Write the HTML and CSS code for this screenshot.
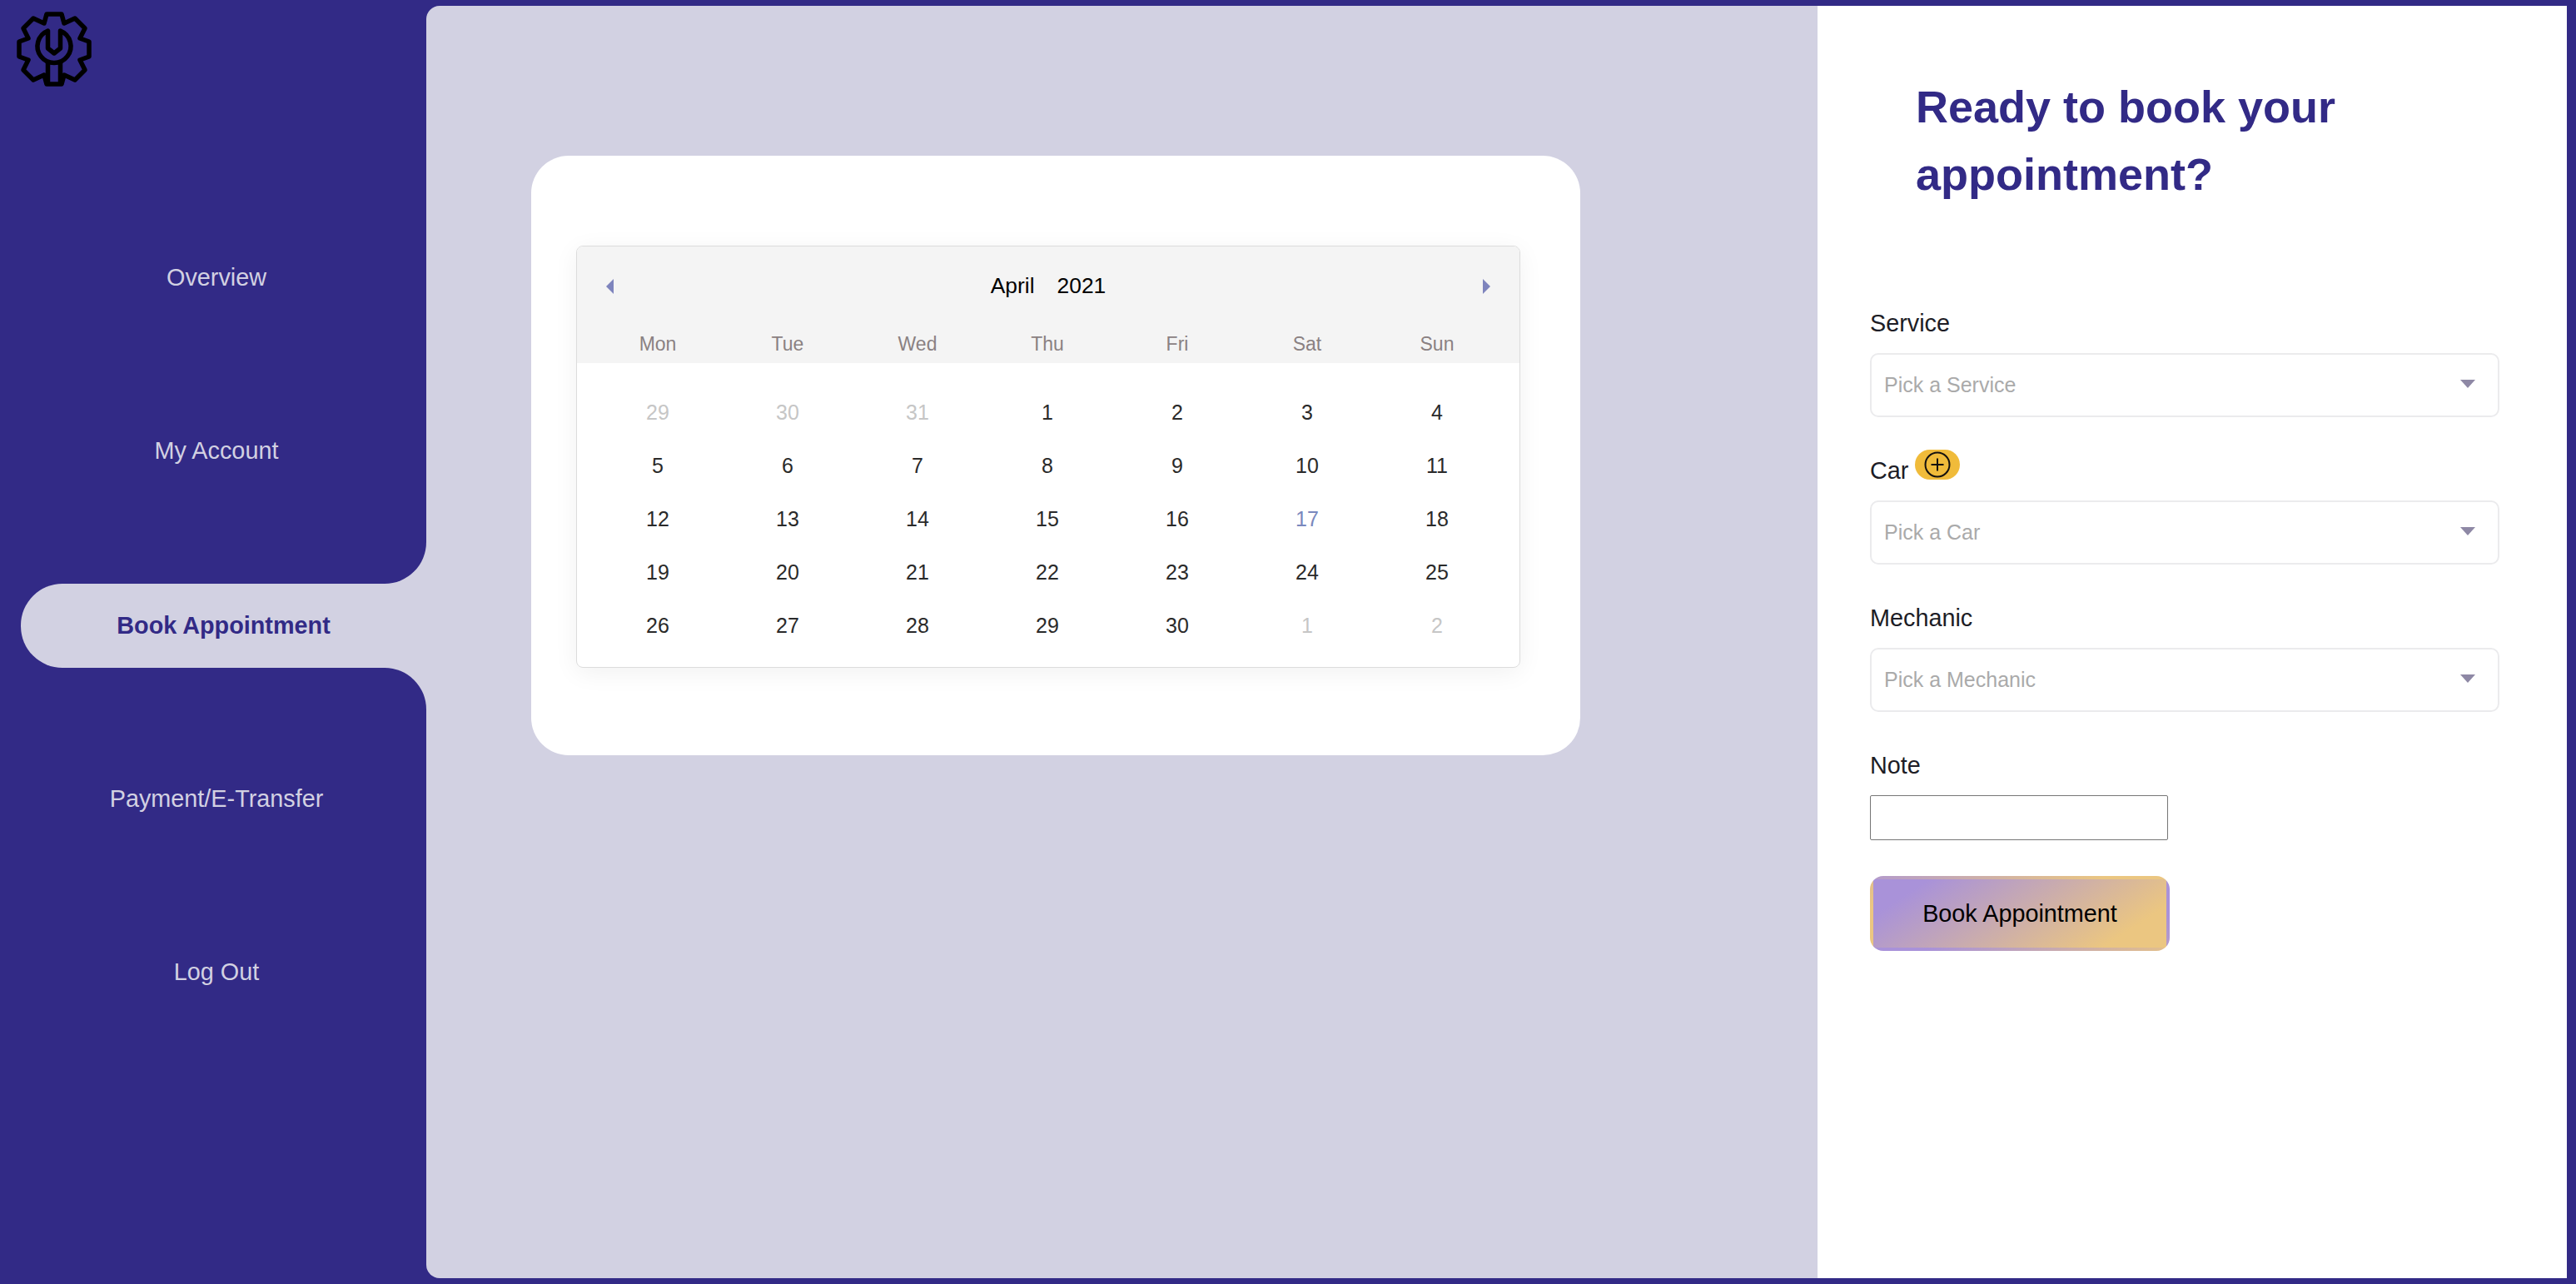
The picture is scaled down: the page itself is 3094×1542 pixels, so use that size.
FILE: index.html
```html
<!DOCTYPE html>
<html lang="en">
<head>
  <meta charset="UTF-8">
  <meta name="viewport" content="width=device-width, initial-scale=1.0">
  <title>Book Appointment</title>
  <link rel="stylesheet" href="styles.css">
</head>
<body>
  <aside class="sidebar">
    <div class="side-top">
      <div class="logo">
        <svg viewBox="0 0 90 90" width="90" height="90" fill="none" stroke="#000" stroke-width="5.5" stroke-linejoin="round">
          <path d="M36 3H54L57 14L70 8L82 20L76 32L87 36V54L76 58L82 70L70 82L57 76L54 87H36L33 76L20 82L8 70L14 58L3 54V36L14 32L8 20L20 8L33 14Z"/>
          <path d="M37.5 23V44L45 50L52.5 44V23A20 20 0 1 1 37.5 23Z"/>
          <path d="M37.5 60V87M52.5 60V87"/>
        </svg>
      </div>
      <a class="nav-link" href="#">Overview</a>
      <a class="nav-link" href="#">My Account</a>
    </div>
    <div class="side-active">
      <a class="nav-pill" href="#">Book Appointment</a>
    </div>
    <div class="side-bottom">
      <a class="nav-link" href="#">Payment/E-Transfer</a>
      <a class="nav-link" href="#">Log Out</a>
    </div>
  </aside>

  <main class="panel">
    <section class="calendar-area">
      <div class="card">
        <div class="calendar">
          <div class="cal-head">
            <div class="cal-title">
              <span class="arrow arrow-left"></span>
              <span class="cal-month">April</span>
              <span class="cal-year">2021</span>
              <span class="arrow arrow-right"></span>
            </div>
            <div class="cal-week">
              <span>Mon</span><span>Tue</span><span>Wed</span><span>Thu</span><span>Fri</span><span>Sat</span><span>Sun</span>
            </div>
          </div>
          <div class="cal-days">
            <span class="muted">29</span><span class="muted">30</span><span class="muted">31</span><span>1</span><span>2</span><span>3</span><span>4</span>
            <span>5</span><span>6</span><span>7</span><span>8</span><span>9</span><span>10</span><span>11</span>
            <span>12</span><span>13</span><span>14</span><span>15</span><span>16</span><span class="today">17</span><span>18</span>
            <span>19</span><span>20</span><span>21</span><span>22</span><span>23</span><span>24</span><span>25</span>
            <span>26</span><span>27</span><span>28</span><span>29</span><span>30</span><span class="muted">1</span><span class="muted">2</span>
          </div>
        </div>
      </div>
    </section>

    <section class="booking">
      <h1>Ready to book your appointment?</h1>
      <form class="booking-form">
        <div class="field">
          <label>Service</label>
          <div class="picker"><span>Pick a Service</span><i class="caret"></i></div>
        </div>
        <div class="field">
          <label>Car <span class="add-btn">
            <svg viewBox="0 0 32 32" width="32" height="32" fill="none" stroke="#14110f" stroke-width="2"><circle cx="16" cy="16" r="14.5"/><path d="M16 8.5V23.5M8.5 16H23.5"/></svg>
          </span></label>
          <div class="picker"><span>Pick a Car</span><i class="caret"></i></div>
        </div>
        <div class="field">
          <label>Mechanic</label>
          <div class="picker"><span>Pick a Mechanic</span><i class="caret"></i></div>
        </div>
        <div class="field field-note">
          <label for="note">Note</label>
          <input type="text" id="note">
        </div>
        <button type="button" class="book-btn">Book Appointment</button>
      </form>
    </section>
  </main>
</body>
</html>
```

FILE: styles.css
```css
* {
  margin: 0;
  padding: 0;
  box-sizing: border-box;
  font-family: "Liberation Sans", Arial, sans-serif;
}

body {
  background: #322a86;
  display: flex;
  height: 100vh;
  overflow: hidden;
}

/* Sidebar */
.sidebar {
  width: 512px;
  flex: none;
  display: flex;
  flex-direction: column;
  background: #d2d1e2;
}

.side-top {
  height: 701px;
  flex: none;
  background: #322a86;
  border-bottom-right-radius: 50px;
}

.logo {
  height: 229px;
  padding: 14px 0 0 20px;
}

.logo svg {
  display: block;
}

.nav-link {
  display: flex;
  align-items: center;
  justify-content: center;
  height: 208px;
  padding-left: 8px;
  color: #d2d1e2;
  font-size: 28.8px;
  text-decoration: none;
}

.side-active {
  height: 101px;
  flex: none;
  background: #322a86;
  padding-left: 25px;
}

.nav-pill {
  display: flex;
  align-items: center;
  justify-content: center;
  height: 100%;
  background: #d2d1e2;
  border-radius: 50px 0 0 50px;
  color: #322a86;
  font-size: 28.8px;
  font-weight: bold;
  text-decoration: none;
}

.side-bottom {
  flex: 1;
  background: #322a86;
  border-top-right-radius: 50px;
  padding-top: 53px;
}

/* Main panel */
.panel {
  flex: 1;
  display: flex;
  margin: 7px 11px 7px 0;
  background: #d2d1e2;
  border-radius: 16px 0 0 16px;
  overflow: hidden;
}

.calendar-area {
  flex: 1;
  padding: 180px 0 0 126px;
}

.card {
  width: 1260px;
  height: 720px;
  padding: 108px 72px 0 54px;
  background: white;
  border-radius: 45px;
}

/* Calendar */
.calendar {
  height: 507px;
  border: 1.5px solid #dcdcdc;
  border-radius: 8px;
  box-shadow: 0 6px 30px rgba(0, 0, 0, 0.06);
  overflow: hidden;
}

.cal-head {
  height: 140px;
  background: #f4f4f4;
}

.cal-title {
  height: 94px;
  display: flex;
  align-items: center;
  justify-content: center;
  gap: 27px;
  position: relative;
  font-size: 26.4px;
  color: black;
}

.arrow {
  position: absolute;
  top: 39px;
  width: 0;
  height: 0;
  border-top: 9px solid transparent;
  border-bottom: 9px solid transparent;
}

.arrow-left {
  left: 35px;
  border-right: 9px solid #7e84bd;
}

.arrow-right {
  right: 35px;
  border-left: 9px solid #7e84bd;
}

.cal-week,
.cal-days {
  display: grid;
  grid-template-columns: repeat(7, 1fr);
  padding: 0 21px 0 19px;
  text-align: center;
}

.cal-week {
  height: 46px;
  line-height: 46px;
  font-size: 23px;
  color: #8a8182;
}

.cal-days {
  padding-top: 27px;
  grid-auto-rows: 64px;
  line-height: 64px;
  font-size: 25px;
  color: #2a2a2a;
}

.muted {
  color: #c6c6c6;
}

.today {
  color: #7a88bd;
}

/* Booking form */
.booking {
  width: 900px;
  flex: none;
  background: white;
  padding: 81px 0 0 63px;
}

.booking h1 {
  margin-left: 55px;
  width: 600px;
  color: #322a86;
  font-size: 54px;
  line-height: 81px;
  font-weight: bold;
}

.booking-form {
  margin-top: 120px;
}

.field {
  width: 756px;
  margin-bottom: 46px;
}

.field label {
  display: flex;
  align-items: flex-end;
  height: 36px;
  gap: 8px;
  margin-bottom: 18px;
  color: #1d1d26;
  font-size: 28.8px;
  line-height: 36px;
}

.add-btn {
  display: flex;
  align-items: center;
  justify-content: center;
  width: 54px;
  height: 36px;
  margin-bottom: 7px;
  border-radius: 18px;
  background: #f0bb3a;
}

.picker {
  display: flex;
  align-items: center;
  justify-content: space-between;
  height: 77px;
  padding: 0 27px 0 15px;
  border: 2px solid #ebebed;
  border-radius: 10px;
  color: #aaa;
  font-size: 25px;
}

.caret {
  width: 0;
  height: 0;
  border-left: 9px solid transparent;
  border-right: 9px solid transparent;
  border-top: 10px solid #8e88a5;
  margin-bottom: 3px;
}

.field-note {
  margin-bottom: 43px;
}

.field-note input {
  display: block;
  width: 358px;
  height: 54px;
  border: 1.5px solid #767676;
  border-radius: 2px;
  background: white;
}

.book-btn {
  width: 360px;
  height: 90px;
  border: 4px solid transparent;
  border-radius: 16px;
  background: linear-gradient(147deg, #a992d9 14%, #ebc681 84%);
  color: black;
  font-size: 28.8px;
  cursor: pointer;
}
```
